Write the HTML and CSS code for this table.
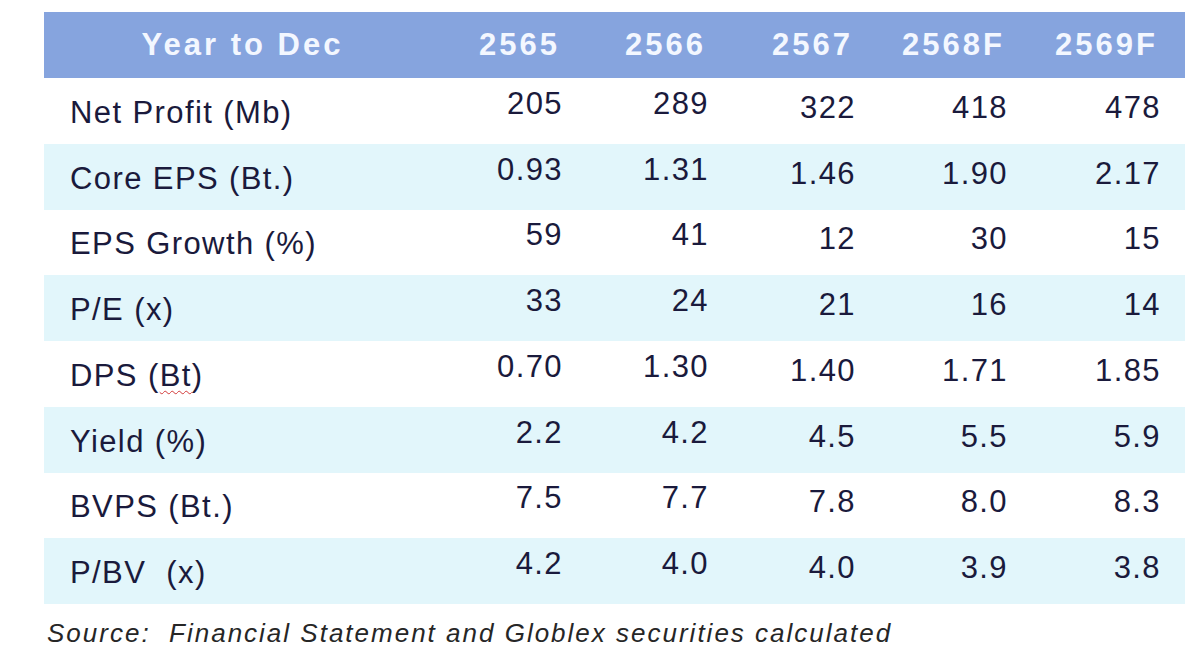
FILE: index.html
```html
<!DOCTYPE html>
<html lang="en">
<head>
<meta charset="utf-8">
<title>Financial summary</title>
<link rel="stylesheet" href="styles.css">
</head>
<body>
<div class="wrap">
  <table class="fin">
    <colgroup>
      <col class="w-label"><col class="w-a"><col class="w-a"><col class="w-b"><col class="w-c"><col class="w-c">
    </colgroup>
    <thead>
      <tr>
        <th class="h-label">Year to Dec</th>
        <th>2565</th><th>2566</th><th>2567</th><th>2568F</th><th>2569F</th>
      </tr>
    </thead>
    <tbody>
      <tr><td class="lbl">Net Profit (Mb)</td><td class="e">205</td><td class="e">289</td><td class="l">322</td><td class="l">418</td><td class="l">478</td></tr>
      <tr class="alt"><td class="lbl">Core EPS (Bt.)</td><td class="e">0.93</td><td class="e">1.31</td><td class="l">1.46</td><td class="l">1.90</td><td class="l">2.17</td></tr>
      <tr><td class="lbl">EPS Growth (%)</td><td class="e">59</td><td class="e">41</td><td class="l">12</td><td class="l">30</td><td class="l">15</td></tr>
      <tr class="alt"><td class="lbl">P/E (x)</td><td class="e">33</td><td class="e">24</td><td class="l">21</td><td class="l">16</td><td class="l">14</td></tr>
      <tr><td class="lbl">DPS (<span class="spell">Bt</span>)</td><td class="e">0.70</td><td class="e">1.30</td><td class="l">1.40</td><td class="l">1.71</td><td class="l">1.85</td></tr>
      <tr class="alt"><td class="lbl">Yield (%)</td><td class="e">2.2</td><td class="e">4.2</td><td class="l">4.5</td><td class="l">5.5</td><td class="l">5.9</td></tr>
      <tr><td class="lbl">BVPS (Bt.)</td><td class="e">7.5</td><td class="e">7.7</td><td class="l">7.8</td><td class="l">8.0</td><td class="l">8.3</td></tr>
      <tr class="alt"><td class="lbl">P/BV&nbsp; (x)</td><td class="e">4.2</td><td class="e">4.0</td><td class="l">4.0</td><td class="l">3.9</td><td class="l">3.8</td></tr>
    </tbody>
  </table>
  <p class="source">Source:&nbsp; Financial Statement and Globlex securities calculated</p>
</div>
</body>
</html>
```

FILE: styles.css
```css
html, body {
  margin: 0;
  padding: 0;
  background: #ffffff;
}

body {
  font-family: "Liberation Sans", Arial, sans-serif;
  color: #1a1a3c;
}

.wrap {
  padding: 12px 0 0 44px;
}

.fin {
  width: 1141px;
  border-collapse: collapse;
  table-layout: fixed;
}

.w-label { width: 397px; }
.w-a { width: 146px; }
.w-b { width: 147px; }
.w-c { width: 152px; }
.w-c:last-child { width: 153px; }

.fin thead tr {
  background: #86a4de;
  height: 66px;
}

.fin th {
  font-weight: bold;
  font-size: 31px;
  letter-spacing: 3px;
  color: #f3f7ff;
  text-align: right;
  padding: 0 27px 0 0;
  vertical-align: middle;
}

.fin th.h-label {
  text-align: center;
  padding: 0 0 0 0;
}

.fin tbody tr {
  height: 65.75px;
}

.fin tbody tr.alt {
  background: #e2f6fb;
}

.fin td {
  font-size: 31px;
  letter-spacing: 1.4px;
  vertical-align: middle;
  text-align: right;
  padding: 0 24px 0 0;
  white-space: nowrap;
}

.fin td.lbl {
  text-align: left;
  padding: 4px 0 0 26px;
}

.fin td.e {
  padding-bottom: 14px;
}

.fin td.l {
  padding-bottom: 6px;
}

.spell {
  text-decoration: underline wavy #d23a3a;
  text-decoration-thickness: 1px;
  text-underline-offset: 4px;
}

.source {
  margin: 14px 0 0 3px;
  font-size: 26px;
  font-style: italic;
  letter-spacing: 2px;
  color: #262626;
}
```
